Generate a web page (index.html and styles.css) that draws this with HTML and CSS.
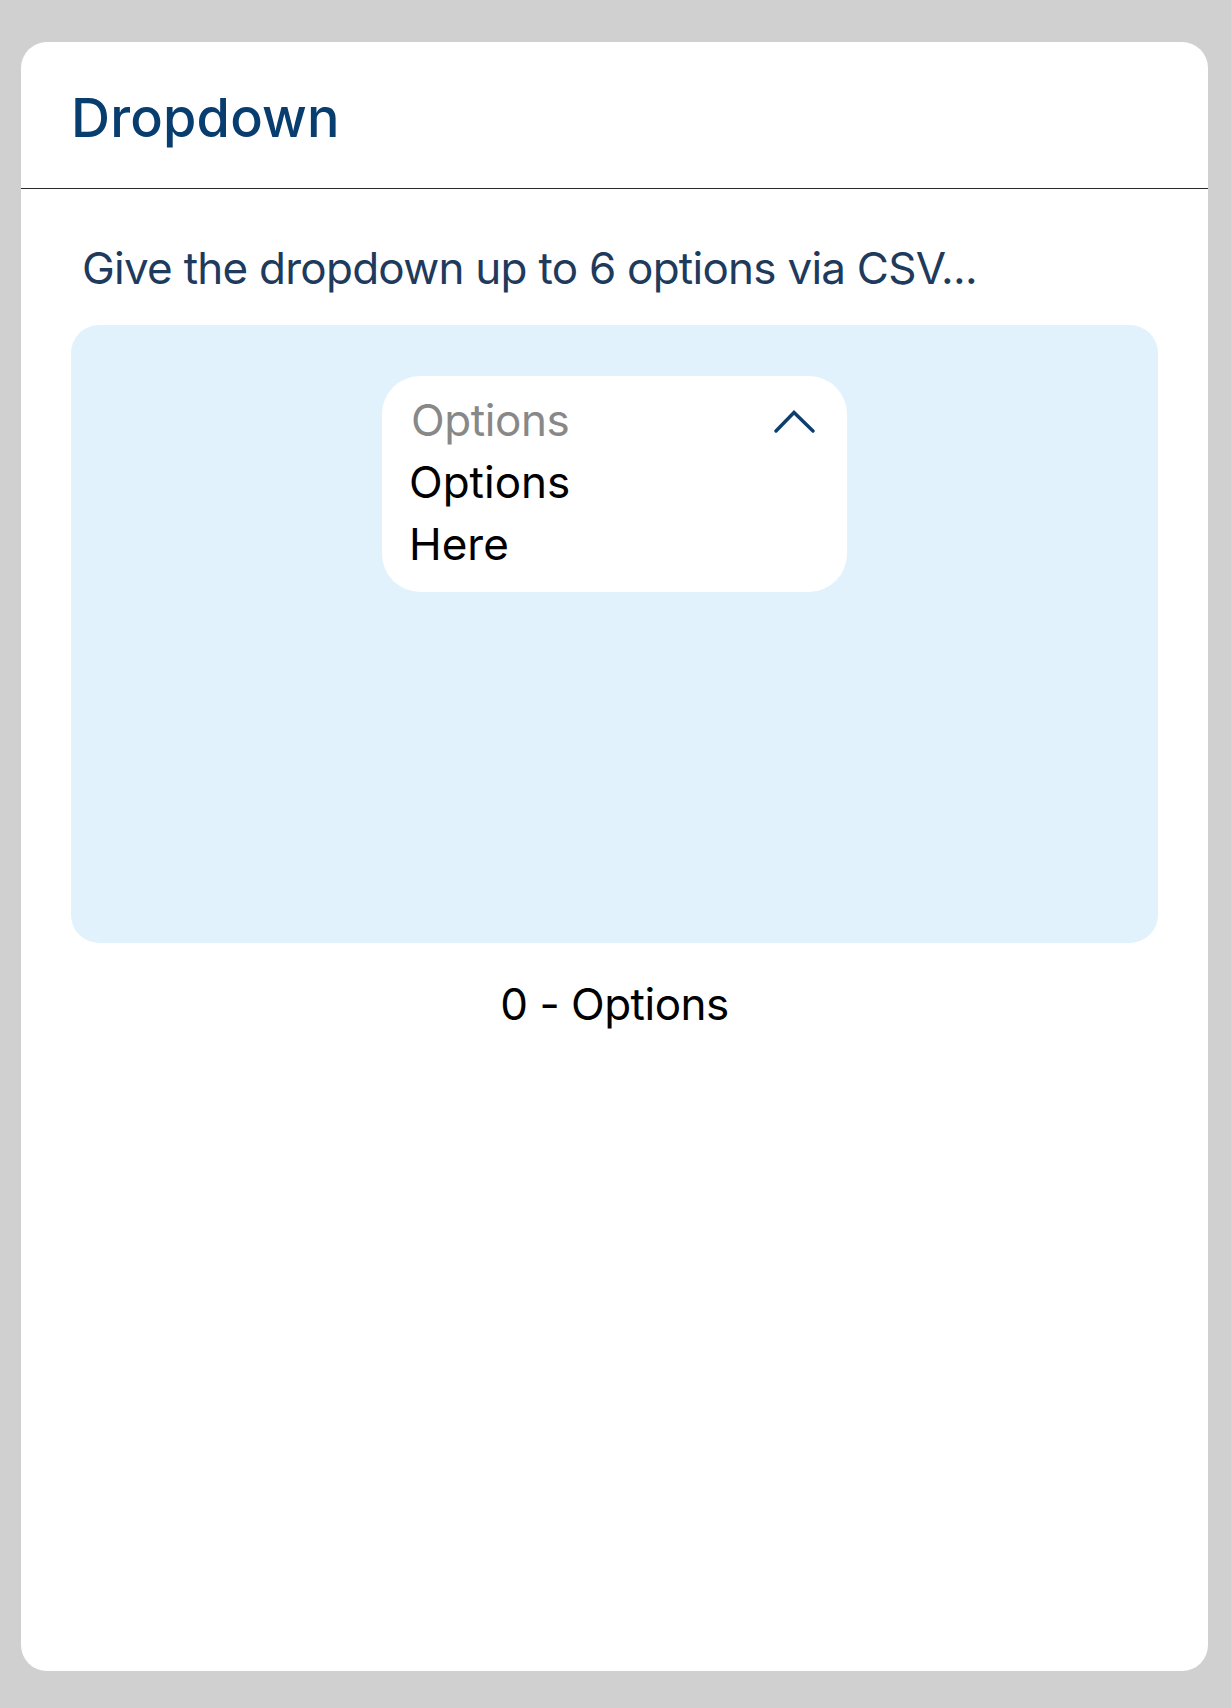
FILE: index.html
```html
<!DOCTYPE html>
<html lang="en">
<head>
<meta charset="utf-8">
<title>Dropdown</title>
<link rel="stylesheet" href="styles.css">
</head>
<body>
  <div class="card">
    <div class="card-header">
      <h1 class="title">Dropdown</h1>
    </div>
    <p class="desc">Give the dropdown up to 6 options via CSV...</p>
    <div class="preview">
      <div class="dropdown">
        <div class="dd-head">
          <span class="dd-label">Options</span>
          <svg class="chevron" width="41" height="23" viewBox="0 0 41 23" aria-hidden="true">
            <path d="M2 21 L20 2.5 L39 21" fill="none" stroke="#0d3e6e" stroke-width="3.4" stroke-linecap="round" stroke-linejoin="miter"/>
          </svg>
        </div>
        <div class="dd-item">Options</div>
        <div class="dd-item">Here</div>
      </div>
    </div>
    <p class="count">0 - Options</p>
  </div>
</body>
</html>
```
FILE: styles.css
```css
* { box-sizing: border-box; }
html, body { margin: 0; }
body {
  background: #d0d0d0;
  padding: 42px 23px 37px 21px;
  font-family: Inter, "Noto Sans", sans-serif;
}
.card {
  background: #ffffff;
  border-radius: 26px;
  height: 1629px;
  overflow: hidden;
}
.card-header {
  height: 147px;
  border-bottom: 1px solid #2a2a2a;
  padding: 49px 0 0 50px;
}
.title {
  margin: 0;
  font-size: 54px;
  line-height: 54px;
  font-weight: 500;
  color: #083d6f;
  letter-spacing: 0.2px;
}
.desc {
  margin: 57px 0 0 61px;
  font-size: 44px;
  line-height: 44px;
  color: #1e3a5c;
  font-weight: 400;
  letter-spacing: -0.75px;
}
.preview {
  margin: 35px 50px 0 50px;
  height: 618px;
  background: #e1f2fd;
  border-radius: 28px;
  padding-top: 51px;
  display: flex;
  justify-content: center;
  align-items: flex-start;
}
.dropdown {
  width: 465px;
  height: 216px;
  background: #ffffff;
  border-radius: 38px;
  padding: 13px 32px 0 27px;
}
.dd-head {
  display: flex;
  justify-content: space-between;
  align-items: center;
  height: 62px;
}
.dd-label {
  font-size: 44px;
  line-height: 62px;
  color: #888888;
  padding-left: 2px;
  letter-spacing: -0.4px;
}
.chevron { display: block; margin-top: 2px; }
.dd-item {
  font-size: 44px;
  line-height: 62px;
  color: #000000;
}
.count {
  margin: 39px 0 0 0;
  text-align: center;
  font-size: 44px;
  line-height: 44px;
  color: #000000;
  letter-spacing: -0.5px;
}
```
